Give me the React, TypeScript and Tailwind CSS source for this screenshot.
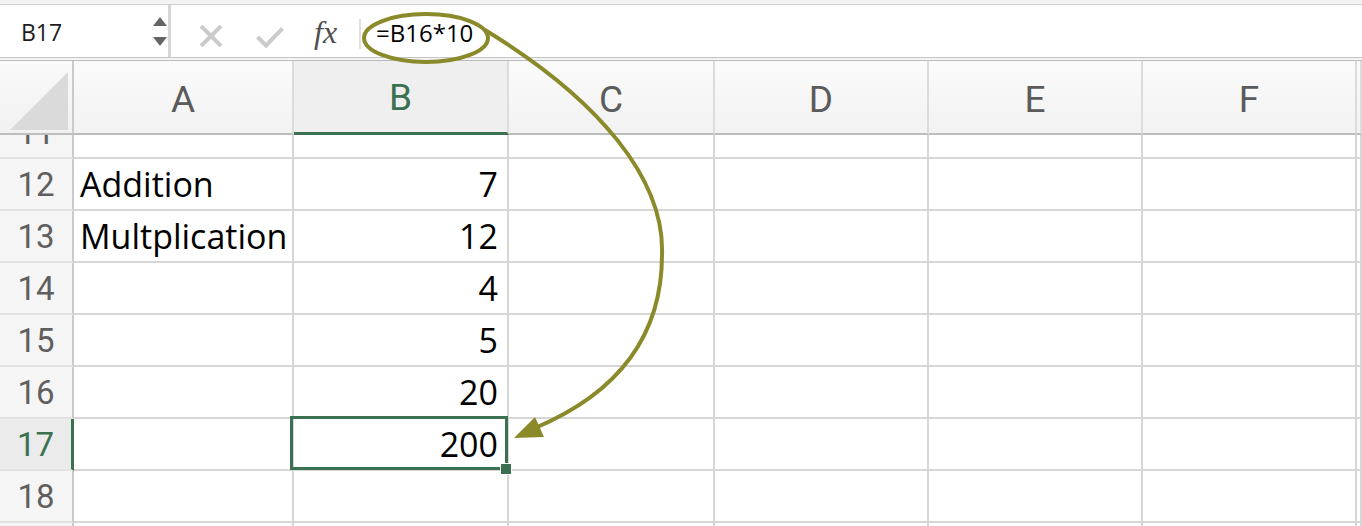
import React from 'react'

const cols = ['A', 'B', 'C', 'D', 'E', 'F', '']

const rows: { n: number | null; a?: string; b?: string }[] = [
  { n: 12, a: 'Addition', b: '7' },
  { n: 13, a: 'Multplication', b: '12' },
  { n: 14, b: '4' },
  { n: 15, b: '5' },
  { n: 16, b: '20' },
  { n: 17, b: '200' },
  { n: 18 },
  { n: null },
]

function FormulaBar() {
  return (
    <div>
      <div className="h-[5px] bg-[#f3f3f3] border-b border-[#cfcfcf]" />
      <div className="flex h-[52px] bg-white">
        <div className="w-[171px] h-full flex items-center pl-[21px] pr-[1px] border-r-[3px] border-[#d6d6d6]">
          <span className="mt-[2px] text-[23px] leading-none text-[#1c1c1c] font-['Open_Sans',sans-serif]">B17</span>
          <svg className="ml-auto" width="14" height="29" viewBox="0 0 14 29">
            <polygon points="0,9 7,0 14,9" fill="#666" />
            <polygon points="0,20 14,20 7,29" fill="#666" />
          </svg>
        </div>
        {/* cancel */}
        <svg className="self-start mt-[20px] ml-[28px]" width="24" height="22" viewBox="0 0 24 22">
          <path d="M2 1 L22 21 M22 1 L2 21" stroke="#cbcbcb" strokeWidth="4" strokeLinecap="butt" />
        </svg>
        {/* enter */}
        <svg className="self-start mt-[21px] ml-[33px]" width="28" height="22" viewBox="0 0 28 22">
          <path d="M1.5 11 L10 19.5 L26.5 2.5" stroke="#cbcbcb" strokeWidth="4" fill="none" />
        </svg>
        <span className="self-start mt-[11px] ml-[30px] w-[32px] text-[32px] leading-none italic text-[#4f4f4f] font-['Liberation_Serif',serif]">
          fx
        </span>
        <div className="self-start mt-[14px] ml-[13px] w-[2px] h-[30px] bg-[#e0e0e0]" />
        <span className="self-start mt-[16px] ml-[15px] text-[24px] leading-none text-black font-['Open_Sans',sans-serif]">
          =B16*10
        </span>
      </div>
      <div className="h-[1px] bg-[#c4c4c4]" />
      <div className="h-[2px] bg-[#f4f4f4]" />
      <div className="h-[1px] bg-[#bcbcbc]" />
    </div>
  )
}

function Grid() {
  return (
    <div className="grid grid-cols-[74px_220px_215px_206px_214px_214px_214px_1fr]">
      {/* header row */}
      <div className="h-[74px] bg-gradient-to-b from-[#fafafa] to-[#f1f1f1] border-r-2 border-b-2 border-r-[#cacaca] border-b-[#bdbdbd] relative">
        <svg className="absolute left-0 top-0" width="72" height="72" viewBox="0 0 72 72">
          <polygon points="10,69 68,69 68,11" fill="#dadada" />
        </svg>
      </div>
      {cols.map((c, i) => (
        <div
          key={i}
          className={
            c === 'B'
              ? 'h-[74px] flex items-center justify-center pt-[2px] bg-[#efefef] border-r-2 border-r-[#dcdcdc] border-b-[3px] border-b-[#3b7150] text-[#3b7150] text-[37px] leading-none font-[Roboto,sans-serif]'
              : 'h-[74px] flex items-center justify-center pt-[4px] bg-gradient-to-b from-[#fbfbfb] to-[#f2f2f2] border-r-2 border-r-[#dcdcdc] border-b-2 border-b-[#bdbdbd] text-[#5b5b5b] text-[37px] leading-none font-[Roboto,sans-serif]'
          }
        >
          {c}
        </div>
      ))}

      {/* row 11, scrolled partly out of view */}
      <div className="h-[24px] overflow-hidden bg-[#f5f5f5] border-r-2 border-r-[#cacaca] border-b-2 border-b-[#e2e2e2]">
        <div className="h-[50px] mt-[-28px] flex items-center justify-center text-[33px] leading-none text-[#5f5f5f] font-[Roboto,sans-serif]">
          11
        </div>
      </div>
      {cols.map((c, i) => (
        <div key={i} className="h-[24px] border-r-2 border-b-2 border-[#d6d6d6] bg-white" />
      ))}

      {rows.map((r, ri) => {
        const sel = r.n === 17
        return (
          <React.Fragment key={ri}>
            <div
              className={
                sel
                  ? 'h-[52px] flex items-center justify-center bg-[#ebebeb] border-r-[3px] border-r-[#3b7150] border-b-2 border-b-[#e2e2e2] text-[33px] leading-none text-[#3b7150] font-[Roboto,sans-serif]'
                  : 'h-[52px] flex items-center justify-center bg-[#f5f5f5] border-r-2 border-r-[#cacaca] border-b-2 border-b-[#e2e2e2] text-[33px] leading-none text-[#5f5f5f] font-[Roboto,sans-serif]'
              }
            >
              {r.n}
            </div>
            <div className="h-[52px] flex items-center pl-[6px] border-r-2 border-b-2 border-[#d6d6d6] bg-white text-[34px] leading-none text-black font-['Open_Sans',sans-serif] whitespace-nowrap">
              {r.a}
            </div>
            <div className="h-[52px] relative flex items-center justify-end pr-[9px] border-r-2 border-b-2 border-[#d6d6d6] bg-white text-[34px] leading-none text-black font-['Open_Sans',sans-serif]">
              {r.b}
              {sel && (
                <>
                  <div className="absolute left-[-4px] right-[-1px] top-[-3px] bottom-[-1px] border-[3px] border-[#3b7150] z-10" />
                  <div className="absolute right-[-5px] bottom-[-6px] w-[12px] h-[12px] bg-[#3b7150] border border-white z-10" />
                </>
              )}
            </div>
            {cols.slice(2).map((c, i) => (
              <div key={i} className="h-[52px] border-r-2 border-b-2 border-[#d6d6d6] bg-white" />
            ))}
          </React.Fragment>
        )
      })}
    </div>
  )
}

export default function App() {
  return (
    <div className="relative w-[1362px] h-[526px] overflow-hidden bg-white">
      <FormulaBar />
      <Grid />
      {/* annotation: circle round the formula and arrow to the cell */}
      <svg className="absolute left-0 top-0 pointer-events-none z-20" width="1362" height="526" viewBox="0 0 1362 526">
        <ellipse cx="426" cy="38" rx="62" ry="24" fill="none" stroke="#8a8a2a" strokeWidth="4" />
        <path
          d="M485 30 C600 100, 665 180, 662 255 C662 330, 625 390, 535 428"
          fill="none"
          stroke="#8a8a2a"
          strokeWidth="4"
        />
        <polygon points="514,438 535,417 544,437" fill="#8a8a2a" />
      </svg>
    </div>
  )
}
